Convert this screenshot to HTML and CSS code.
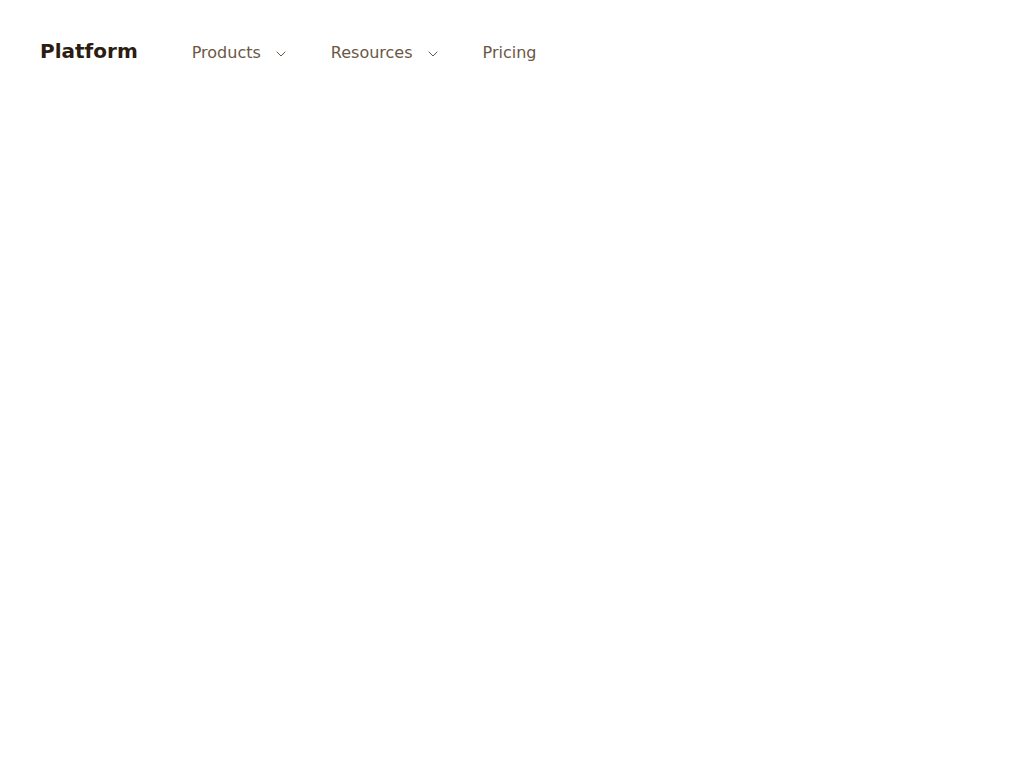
FILE: index.html
```html
<!DOCTYPE html>
<html lang="en">
<head>
<meta charset="utf-8">
<title>Platform</title>
<link rel="stylesheet" href="styles.css">
</head>
<body>
<header class="site-header">
  <a class="brand" href="#">Platform</a>
  <nav class="main-nav">
    <a class="nav-item" href="#">Products<svg class="chevron" viewBox="0 0 24 24" width="16" height="16" fill="none" stroke="currentColor" stroke-width="1.5" stroke-linecap="round" stroke-linejoin="round"><path d="m6 9 6 6 6-6"/></svg></a>
    <a class="nav-item" href="#">Resources<svg class="chevron" viewBox="0 0 24 24" width="16" height="16" fill="none" stroke="currentColor" stroke-width="1.5" stroke-linecap="round" stroke-linejoin="round"><path d="m6 9 6 6 6-6"/></svg></a>
    <a class="nav-item" href="#">Pricing</a>
  </nav>
</header>
</body>
</html>
```
FILE: styles.css
```css
html, body {
  margin: 0;
  background: #ffffff;
}

body {
  font-family: "DejaVu Sans", sans-serif;
}

.site-header {
  display: flex;
  align-items: baseline;
  gap: 54px;
  padding: 39px 40px;
}

.brand {
  font-size: 20px;
  font-weight: 700;
  color: #2b1d12;
  text-decoration: none;
}

.main-nav {
  display: flex;
  align-items: baseline;
  gap: 42px;
}

.nav-item {
  font-size: 16px;
  color: #6b5744;
  text-decoration: none;
  white-space: nowrap;
}

.chevron {
  margin-left: 12px;
  vertical-align: middle;
}
```
